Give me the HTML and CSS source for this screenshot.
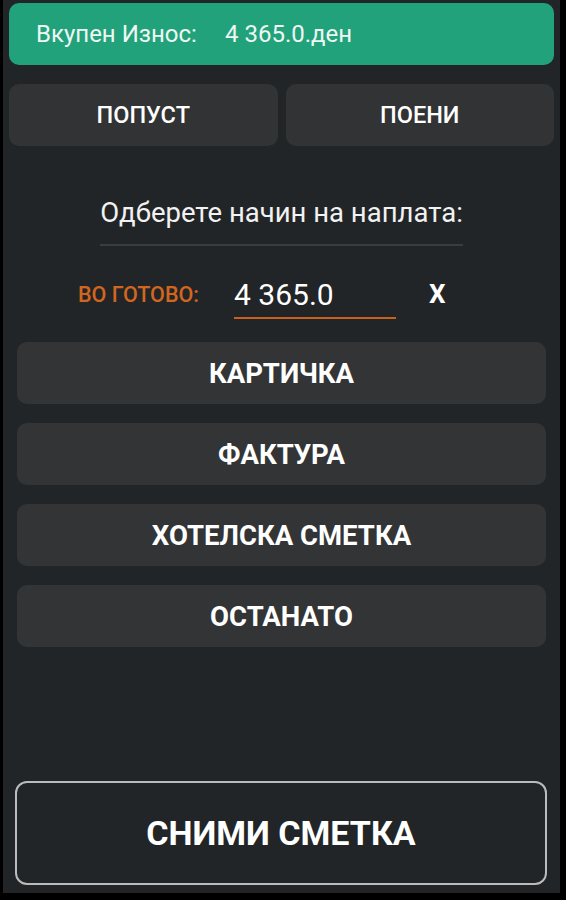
FILE: index.html
```html
<!DOCTYPE html>
<html lang="mk">
<head>
    <meta charset="UTF-8">
    <meta name="viewport" content="width=device-width, initial-scale=1.0">
    <title>Наплата</title>
    <link rel="stylesheet" href="styles.css">
</head>
<body>

<div class="screen">
    <div class="total">
        <span class="total-label">Вкупен Износ:</span>
        <span class="total-value">4 365.0.ден</span>
    </div>

    <div class="extras">
        <button class="extra">ПОПУСТ</button>
        <button class="extra">ПОЕНИ</button>
    </div>

    <div class="choose">
        <div class="choose-title">Одберете начин на наплата:</div>
    </div>

    <div class="cash">
        <span class="cash-label">ВО ГОТОВО:</span>
        <input type="text" class="cash-input" value="4 365.0" />
        <button class="cash-clear">X</button>
    </div>

    <div class="methods">
        <button class="method">КАРТИЧКА</button>
        <button class="method">ФАКТУРА</button>
        <button class="method">ХОТЕЛСКА СМЕТКА</button>
        <button class="method">ОСТАНАТО</button>
    </div>

    <button class="checkout">СНИМИ СМЕТКА</button>
</div>

</body>
</html>
```

FILE: styles.css
```css
* {
    box-sizing: border-box;
}
body {
    margin: 0;
    background-color: #000;
    font-family: Roboto, "Noto Sans", sans-serif;
    color: #f2f2f2;
}
.screen {
    margin: 0 6px 0 3px;
    height: 893px;
    background-color: #222527;
    padding: 3px 6px 8px 6px;
    display: flex;
    flex-direction: column;
}
button {
    font-family: inherit;
    border: none;
    cursor: pointer;
    color: #fff;
}
.total {
    height: 62px;
    background-color: #22a27b;
    border-radius: 10px;
    display: flex;
    align-items: center;
    padding-left: 27px;
    font-size: 24px;
    color: #eef7f3;
}
.total-label {
    width: 189px;
}
.extras {
    display: flex;
    gap: 8px;
    margin-top: 19px;
}
.extra {
    flex: 1;
    height: 62px;
    background-color: #323334;
    border-radius: 10px;
    font-size: 23.5px;
    font-weight: 500;
}
.choose {
    display: flex;
    justify-content: center;
    margin-top: 50px;
}
.choose-title {
    font-size: 27.5px;
    padding-bottom: 15px;
    border-bottom: 2px solid #3a3d40;
}
.cash {
    display: flex;
    align-items: center;
    margin-top: 29px;
    padding-left: 69px;
}
.cash-label {
    color: #d3661f;
    font-size: 21.5px;
    font-weight: 500;
    width: 156px;
    margin-bottom: 6px;
}
.cash-input {
    width: 162px;
    height: 44px;
    background: transparent;
    border: none;
    border-bottom: 2px solid #c8601e;
    color: #fff;
    font-family: inherit;
    font-size: 30px;
    padding: 0 0 4px 0;
    outline: none;
}
.cash-clear {
    background: transparent;
    font-size: 26px;
    font-weight: 700;
    margin-left: 33px;
    margin-bottom: 6px;
    padding: 0;
}
.methods {
    display: flex;
    flex-direction: column;
    gap: 19px;
    margin-top: 23px;
    padding: 0 8px;
}
.method {
    height: 62px;
    background-color: #333436;
    border-radius: 10px;
    font-size: 27.5px;
    font-weight: 700;
}
.checkout {
    margin: auto 7px 0 6px;
    height: 104px;
    background-color: #222527;
    border: 2px solid #b9bbbc;
    border-radius: 12px;
    font-size: 34px;
    font-weight: 700;
}
```
